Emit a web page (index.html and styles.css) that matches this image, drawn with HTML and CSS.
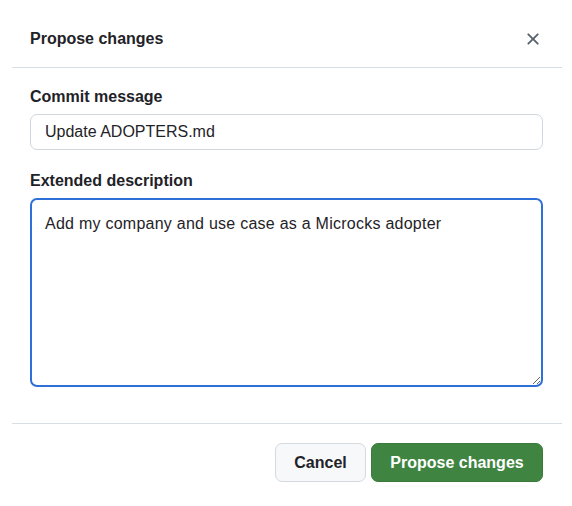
FILE: index.html
```html
<!DOCTYPE html>
<html lang="en">
<head>
<meta charset="utf-8">
<title>Propose changes</title>
<link rel="stylesheet" href="styles.css">
</head>
<body>
<div class="dialog">
  <div class="dialog-header">
    <h2 class="dialog-title">Propose changes</h2>
    <button class="close-btn" aria-label="Close">
      <svg width="20" height="20" viewBox="0 0 16 16" aria-hidden="true"><path fill="currentColor" d="M3.72 3.72a.75.75 0 0 1 1.06 0L8 6.94l3.22-3.22a.749.749 0 0 1 1.275.326.749.749 0 0 1-.215.734L9.06 8l3.22 3.22a.749.749 0 0 1-.326 1.275.749.749 0 0 1-.734-.215L8 9.06l-3.220 3.22a.751.751 0 0 1-1.042-.018.751.751 0 0 1-.018-1.042L6.94 8 3.72 4.78a.75.75 0 0 1 0-1.06Z"/></svg>
    </button>
  </div>
  <div class="dialog-body">
    <label class="field-label" for="msg">Commit message</label>
    <input class="text-input" id="msg" type="text" value="Update ADOPTERS.md">
    <label class="field-label second" for="desc">Extended description</label>
    <textarea class="text-area" id="desc">Add my company and use case as a Microcks adopter</textarea>
  </div>
  <div class="dialog-footer">
    <button class="btn btn-default">Cancel</button>
    <button class="btn btn-primary">Propose changes</button>
  </div>
</div>
</body>
</html>
```
FILE: styles.css
```css
* { box-sizing: border-box; }
html, body {
  margin: 0;
  padding: 0;
  background: #ffffff;
}
body {
  font-family: "Liberation Sans", Arial, sans-serif;
  color: #1f2328;
  font-size: 16px;
}
.dialog {
  margin-left: 12px;
  width: 550px;
  background: #ffffff;
}
.dialog-header {
  height: 68px;
  padding: 11px 18px 0 18px;
  display: flex;
  align-items: center;
  justify-content: space-between;
  border-bottom: 1px solid #d8dee4;
}
.dialog-title {
  margin: 0;
  font-size: 16px;
  font-weight: 700;
  line-height: 24px;
}
.close-btn {
  border: 0;
  background: transparent;
  padding: 0;
  width: 20px;
  height: 20px;
  color: #59636e;
  display: flex;
  margin-right: 1px;
  margin-top: -1px;
}
.dialog-body {
  padding: 17px 19px 36px 18px;
  display: flex;
  flex-direction: column;
}
.field-label {
  font-size: 16px;
  font-weight: 700;
  line-height: 24px;
  margin-bottom: 5px;
}
.field-label.second {
  margin-top: 19px;
}
.text-input {
  height: 36px;
  width: 100%;
  border: 1px solid #d0d7de;
  border-radius: 7px;
  padding: 0 14px;
  font-family: "Liberation Sans", Arial, sans-serif;
  font-size: 16px;
  color: #1f2328;
  background: #ffffff;
  outline: none;
}
.text-area {
  height: 189px;
  width: 100%;
  border: 2px solid #2f6fd8;
  border-radius: 7px;
  padding: 14px 13px;
  font-family: "Liberation Sans", Arial, sans-serif;
  font-size: 16px;
  line-height: 20px;
  letter-spacing: 0.25px;
  color: #1f2328;
  background: #ffffff;
  outline: none;
  resize: vertical;
}
.dialog-footer {
  border-top: 1px solid #d8dee4;
  padding: 19px 19px 0 18px;
  display: flex;
  justify-content: flex-end;
  gap: 5px;
}
.btn {
  height: 39px;
  border-radius: 7px;
  font-family: "Liberation Sans", Arial, sans-serif;
  font-size: 16px;
  font-weight: 700;
  padding: 0;
  white-space: nowrap;
  text-align: center;
}
.btn-default {
  background: #f6f8fa;
  border: 1px solid #d5dae0;
  color: #1f2328;
  width: 91px;
}
.btn-primary {
  background: #3f8541;
  border: 1px solid #3a7b3c;
  color: #ffffff;
  width: 172px;
}
```
